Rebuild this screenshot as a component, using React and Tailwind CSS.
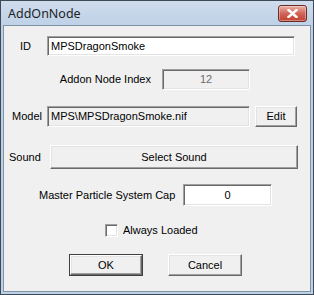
import React from 'react';

const sunken = "border border-t-[#a0a0a0] border-l-[#a0a0a0] border-r-white border-b-white shadow-[inset_1px_1px_0_#696969,inset_-1px_-1px_0_#e3e3e3]";
const raised = "border border-t-white border-l-white border-r-[#696969] border-b-[#696969] shadow-[inset_-1px_-1px_0_#a0a0a0,inset_1px_1px_0_#e3e3e3] bg-[#f0f0f0]";

const CloseButton = () => (
    <div className="mt-[4px] mr-[6px] w-[29px] h-[17px] rounded-[3px] border border-[#6b2b22] bg-gradient-to-b from-[#e9b3a6] via-[#d0655a] to-[#c1412f] flex items-center justify-center shadow-[inset_0_0_0_1px_rgba(255,255,255,0.35)]">
        <svg width="11" height="9" viewBox="0 0 11 9">
            <path d="M1.5 1 L9.5 8 M9.5 1 L1.5 8" stroke="#ffffff" strokeWidth="2.4" strokeLinecap="square" />
        </svg>
    </div>
);

const App = () => {
    return (
        <div className="w-[314px] h-[295px] border border-[#3d4a58] bg-[#bcd0e6] flex flex-col font-['Liberation_Sans',Arial,sans-serif] text-[11px] text-black overflow-hidden">
            {/* titlebar */}
            <div className="h-[24px] flex items-start justify-between bg-gradient-to-b from-[#cfdcec] to-[#bed1e7]">
                <div className="pl-[7px] pt-[5px] text-[12.5px] text-[#1e1e1e] font-['Noto_Sans',sans-serif] leading-[15px]">AddOnNode</div>
                <CloseButton />
            </div>

            {/* client */}
            <div className="mx-[2px] mb-[2px] flex-1 border border-[#8193a6] bg-[#f0f0f0] flex flex-col">
                {/* ID */}
                <div className="flex items-center h-[20px] mt-[10px]">
                    <div className="ml-[16px] w-[27px]">ID</div>
                    <div className={`${sunken} w-[248px] h-full bg-white flex items-center pl-[3px]`}>MPSDragonSmoke</div>
                </div>

                {/* Addon Node Index */}
                <div className="flex items-center h-[21px] mt-[13px]">
                    <div className="w-[147px] text-right">Addon Node Index</div>
                    <div className={`${sunken} ml-[11px] w-[88px] h-full bg-[#f0f0f0] text-[#6d6d6d] flex items-center justify-center`}>12</div>
                </div>

                {/* Model */}
                <div className="flex items-center h-[21px] mt-[16px]">
                    <div className="ml-[8px] w-[35px]">Model</div>
                    <div className={`${sunken} w-[203px] h-full bg-[#f0f0f0] flex items-center pl-[3px]`}>MPS\MPSDragonSmoke.nif</div>
                    <button className={`${raised} ml-[5px] w-[42px] h-full flex items-center justify-center`}>Edit</button>
                </div>

                {/* Sound */}
                <div className="flex items-center h-[24px] mt-[18px]">
                    <div className="ml-[5px] w-[41px]">Sound</div>
                    <button className={`${raised} w-[248px] h-full flex items-center justify-center`}>Select Sound</button>
                </div>

                {/* Master Particle System Cap */}
                <div className="flex items-center h-[22px] mt-[15px]">
                    <div className="ml-[35px] w-[144px]">Master Particle System Cap</div>
                    <div className={`${sunken} w-[89px] h-full bg-white flex items-center justify-center`}>0</div>
                </div>

                {/* Always Loaded */}
                <div className="flex items-center h-[13px] mt-[18px]">
                    <div className={`${sunken} ml-[101px] w-[13px] h-[13px] bg-white`}></div>
                    <div className="ml-[5px]">Always Loaded</div>
                </div>

                {/* buttons */}
                <div className="flex items-center h-[22px] mt-[17px]">
                    <div className="ml-[65px] w-[74px] h-full border border-[#404040]">
                        <button className={`${raised} w-full h-full flex items-center justify-center`}>OK</button>
                    </div>
                    <button className={`${raised} ml-[25px] w-[74px] h-full flex items-center justify-center`}>Cancel</button>
                </div>
            </div>
        </div>
    );
};

export default App;
